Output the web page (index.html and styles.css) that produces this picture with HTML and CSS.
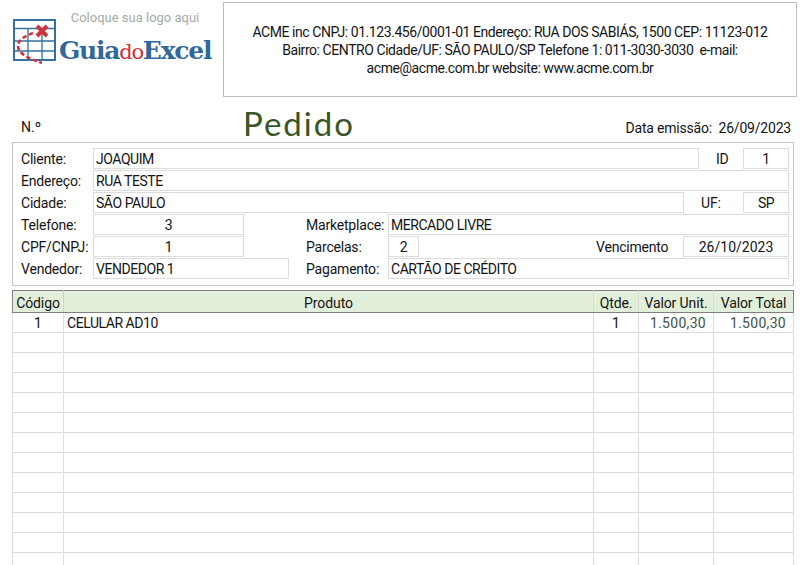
FILE: index.html
```html
<!DOCTYPE html>
<html lang="pt-BR">
<head>
<meta charset="utf-8">
<title>Pedido</title>
<link rel="stylesheet" href="styles.css">
</head>
<body>
<header class="top">
  <div class="logo">
    <svg class="logo-icon" width="44" height="46" viewBox="0 0 44 46">
      <g fill="none" stroke="#37709f">
        <rect x="1" y="1" width="41" height="40" stroke-width="2"/>
        <path d="M1 9.5H42" stroke-width="1.6"/>
        <path d="M1 22H42M1 32H42M15 10V41M29 10V41" stroke-width="1.3"/>
      </g>
      <path d="M20 14C12 17 5 21 5 27C5 35 17 40 29 44" fill="none" stroke="#d0343a" stroke-width="2.6" stroke-dasharray="4.5 2.5"/>
      <path d="M24 7L34 17M34 7L24 17" stroke="#d0343a" stroke-width="4"/>
    </svg>
    <div class="logo-side">
      <div class="logo-caption">Coloque sua logo aqui</div>
      <div class="wordmark">Guia<span class="wordmark-do">do</span>Excel</div>
    </div>
  </div>
  <div class="company">
    ACME inc CNPJ: 01.123.456/0001-01 Endereço: RUA DOS SABIÁS, 1500 CEP: 11123-012<br>
    Bairro: CENTRO Cidade/UF: SÃO PAULO/SP Telefone 1: 011-3030-3030&nbsp; e-mail:<br>
    acme@acme.com.br website: www.acme.com.br
  </div>
</header>

<section class="title-row">
  <div class="order-no">N.º</div>
  <h1 class="title">Pedido</h1>
  <div class="issue">Data emissão:&nbsp; 26/09/2023</div>
</section>

<section class="form">
  <div class="row">
    <span class="label w-label">Cliente:</span><span class="field w-client">JOAQUIM</span>
    <span class="label w-id">ID</span><span class="field center w-small">1</span>
  </div>
  <div class="row">
    <span class="label w-label">Endereço:</span><span class="field grow">RUA TESTE</span>
  </div>
  <div class="row">
    <span class="label w-label">Cidade:</span><span class="field w-city">SÃO PAULO</span>
    <span class="label w-uf">UF:</span><span class="field center w-small">SP</span>
  </div>
  <div class="row">
    <span class="label w-label">Telefone:</span><span class="field center w-phone">3</span>
    <span class="label w-market">Marketplace:</span><span class="field grow">MERCADO LIVRE</span>
  </div>
  <div class="row">
    <span class="label w-label">CPF/CNPJ:</span><span class="field center w-phone">1</span>
    <span class="label w-market">Parcelas:</span><span class="field center w-parc">2</span>
    <span class="label w-venc">Vencimento</span><span class="field center w-date">26/10/2023</span>
  </div>
  <div class="row">
    <span class="label w-label">Vendedor:</span><span class="field w-seller">VENDEDOR 1</span>
    <span class="label w-pay">Pagamento:</span><span class="field grow">CARTÃO DE CRÉDITO</span>
  </div>
</section>

<table class="items">
  <colgroup>
    <col class="c1"><col class="c2"><col class="c3"><col class="c4"><col class="c5">
  </colgroup>
  <thead>
    <tr><th>Código</th><th>Produto</th><th>Qtde.</th><th>Valor Unit.</th><th>Valor Total</th></tr>
  </thead>
  <tbody>
    <tr><td class="center">1</td><td>CELULAR AD10</td><td class="center">1</td><td class="num">1.500,30</td><td class="num">1.500,30</td></tr>
    <tr><td></td><td></td><td></td><td></td><td></td></tr>
    <tr><td></td><td></td><td></td><td></td><td></td></tr>
    <tr><td></td><td></td><td></td><td></td><td></td></tr>
    <tr><td></td><td></td><td></td><td></td><td></td></tr>
    <tr><td></td><td></td><td></td><td></td><td></td></tr>
    <tr><td></td><td></td><td></td><td></td><td></td></tr>
    <tr><td></td><td></td><td></td><td></td><td></td></tr>
    <tr><td></td><td></td><td></td><td></td><td></td></tr>
    <tr><td></td><td></td><td></td><td></td><td></td></tr>
    <tr><td></td><td></td><td></td><td></td><td></td></tr>
    <tr><td></td><td></td><td></td><td></td><td></td></tr>
    <tr><td></td><td></td><td></td><td></td><td></td></tr>
  </tbody>
</table>
</body>
</html>
```
FILE: styles.css
```css
* { box-sizing: border-box; }
html, body { margin: 0; height: 565px; overflow: hidden; background: #fff; }
body { font-family: Roboto, "Liberation Sans", sans-serif; font-size: 14px; color: #141414; }

.top { display: flex; height: 100px; padding: 2px 6px 3px 12px; }
.logo { width: 211px; display: flex; align-items: flex-start; padding-top: 17px; }
.logo-icon { flex: none; margin-left: 1px; }
.logo-side { margin-left: 2px; margin-top: -9px; }
.logo-caption { font-size: 13px; line-height: 16px; color: #a3aca6; text-align: center; width: 152px; }
.wordmark { font-family: "DejaVu Serif", serif; font-weight: 700; font-size: 25px; line-height: 28px; margin-top: 11px; color: #31689b; letter-spacing: -1.25px; white-space: nowrap; }
.wordmark-do { color: #cf2f35; font-weight: 400; font-size: 21px; }

.company { flex: 1; border: 1px solid #bdbdbd; display: flex; align-items: center; justify-content: center; text-align: center; line-height: 18px; padding-top: 1px; letter-spacing: -0.44px; white-space: nowrap; }

.title-row { display: flex; align-items: flex-end; height: 42px; padding: 0 12px 0 21px; }
.order-no { width: 222px; line-height: 16px; padding-bottom: 7px; }
.title { margin: 0 0 -1px; font-family: Lato, sans-serif; font-weight: 400; font-size: 33px; line-height: 40px; color: #375623; letter-spacing: 2px; }
.issue { margin-left: auto; line-height: 16px; padding-bottom: 6px; letter-spacing: -0.2px; }

.form { margin: 0 9px 0 12px; height: 144px; border: 1px solid #c4c4c4; padding: 5px 4px 0 8px; display: flex; flex-direction: column; gap: 1px; }
.row { display: flex; height: 21px; align-items: stretch; }
.label { display: flex; align-items: center; white-space: nowrap; letter-spacing: -0.2px; }
.field { border: 1px solid #dcdcdc; display: flex; align-items: center; padding-left: 2px; white-space: nowrap; letter-spacing: -0.45px; }
.center { justify-content: center; padding-left: 0; text-align: center; }
.grow { flex: 1; }
.w-label { width: 72px; }
.w-client { width: 606px; }
.w-id { width: 44px; padding-left: 17px; }
.w-small { width: 46px; }
.w-city { width: 591px; }
.w-uf { width: 59px; padding-left: 17px; }
.w-phone { width: 151px; }
.w-market { width: 144px; padding-left: 62px; }
.w-parc { width: 31px; }
.w-venc { width: 264px; padding-left: 177px; }
.w-date { width: 106px; letter-spacing: 0; }
.w-seller { width: 196px; }
.w-pay { width: 99px; padding-left: 17px; }

.items { margin: 4px 0 0 12px; width: 781px; table-layout: fixed; border-collapse: collapse; }
.c1 { width: 51px; }
.c2 { width: 530px; }
.c3 { width: 45px; }
.c4 { width: 75px; }
.c5 { width: 80px; }
.items th { height: 22px; padding: 2px 0 0; font-weight: 400; background: #e2efda; border: 1px solid #dcdcdc; border-top: 1px solid #808080; border-bottom: 1px solid #808080; text-align: center; line-height: 16px; letter-spacing: -0.1px; }
.items th:first-child, .items th:last-child { border-left-color: #808080; border-right-color: #808080; }
.items th:nth-child(1) { border-right-color: #c9d6c2; }
.items th:nth-child(3), .items th:nth-child(4), .items th:nth-child(5) { border-left-color: #808080; }
.items td { height: 20px; padding: 0 3px; border: 1px solid #dcdcdc; line-height: 16px; white-space: nowrap; letter-spacing: -0.45px; }
.items td.center { text-align: center; letter-spacing: 0; }
.items td.num { text-align: right; padding-right: 7px; color: #44524a; letter-spacing: 0.3px; }
```
